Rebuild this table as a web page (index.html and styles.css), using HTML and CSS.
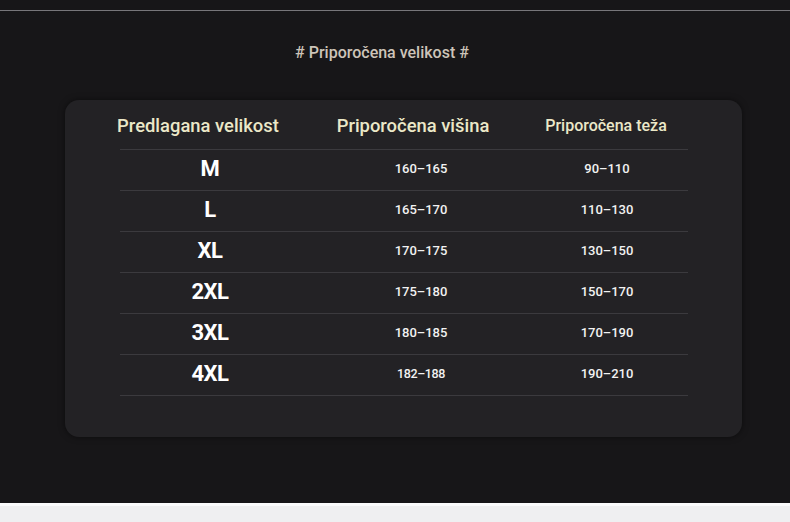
FILE: index.html
```html
<!DOCTYPE html>
<html lang="sl">
<head>
<meta charset="utf-8">
<link rel="stylesheet" href="styles.css">
</head>
<body>
<div class="page">
  <div class="topline"></div>
  <h1 class="title"># Priporočena velikost #</h1>
  <div class="card">
    <div class="table">
      <div class="row head">
        <div class="cell h1">Predlagana velikost</div>
        <div class="cell h2">Priporočena višina</div>
        <div class="cell h3">Priporočena teža</div>
      </div>
      <div class="row"><div class="cell size">M</div><div class="cell num">160–165</div><div class="cell num w">90–110</div></div>
      <div class="row"><div class="cell size">L</div><div class="cell num">165–170</div><div class="cell num w">110–130</div></div>
      <div class="row"><div class="cell size">XL</div><div class="cell num">170–175</div><div class="cell num w">130–150</div></div>
      <div class="row"><div class="cell size">2XL</div><div class="cell num">175–180</div><div class="cell num w">150–170</div></div>
      <div class="row"><div class="cell size">3XL</div><div class="cell num">180–185</div><div class="cell num w">170–190</div></div>
      <div class="row"><div class="cell size">4XL</div><div class="cell num small">182–188</div><div class="cell num w">190–210</div></div>
    </div>
  </div>
</div>
<div class="footer"></div>
</body>
</html>
```
FILE: styles.css
```css
* { box-sizing: border-box; }
html, body { margin: 0; padding: 0; }
body {
  width: 790px;
  height: 522px;
  background: #efeff1;
  font-family: Roboto, "Noto Sans", sans-serif;
  overflow: hidden;
}
.page {
  background: #171618;
  padding-top: 10px;
  display: flex;
  flex-direction: column;
  border-bottom: 3px solid #fbfbfc;
  height: 506px;
}
.topline {
  height: 1px;
  background: #77767a;
}
.title {
  margin: 32px 0 0 0;
  height: 20px;
  line-height: 20px;
  text-align: center;
  font-size: 16px;
  font-weight: 500;
  color: #cdc4b9;
  padding-right: 26px;
}
.card {
  margin: 37px 0 0 65px;
  width: 677px;
  height: 337px;
  background: #232225;
  border-radius: 14px;
  box-shadow: 0 0 6px rgba(0,0,0,0.5);
  padding: 0 0 0 55px;
}
.table {
  width: 568px;
  display: flex;
  flex-direction: column;
}
.row {
  display: grid;
  grid-template-columns: 180px 242px 130px 1fr;
  align-items: center;
  height: 41px;
  border-bottom: 1px solid #3b3a3e;
  padding-bottom: 3px;
}
.row.head {
  height: 50px;
  padding-top: 1px;
  padding-bottom: 0;
}
.cell { text-align: center; white-space: nowrap; }
.h1, .h2 {
  font-size: 18.4px;
  font-weight: 500;
  color: #ebe8c8;
}
.h1 { margin-left: -12px; margin-right: 12px; }
.h2 { padding-right: 16px; }
.h3 {
  font-size: 16px;
  font-weight: 500;
  color: #ebe8c8;
  padding-right: 2px;
}
.size {
  font-size: 22px;
  font-weight: 700;
  color: #ffffff;
  letter-spacing: -0.5px;
}
.num {
  font-size: 13px;
  font-weight: 500;
  color: #f2f2f2;
}
.num.small {
  font-size: 12.5px;
  letter-spacing: -0.4px;
}
.footer {
  height: 16px;
}
```
